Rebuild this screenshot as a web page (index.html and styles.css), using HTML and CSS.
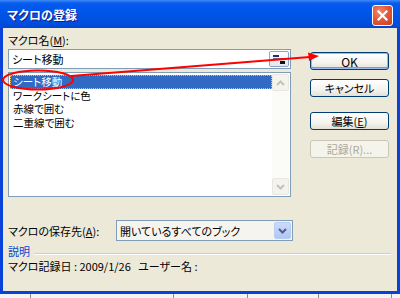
FILE: index.html
```html
<!DOCTYPE html>
<html lang="ja">
<head>
<meta charset="utf-8">
<link rel="stylesheet" href="styles.css">
</head>
<body>
<div class="window">
  <div class="titlebar">
    <span class="title">マクロの登録</span>
    <span class="close"><svg width="11" height="11" viewBox="0 0 11 11"><path d="M1.5 1.5 L9.5 9.5 M9.5 1.5 L1.5 9.5" stroke="#fff" stroke-width="2.2" stroke-linecap="square"/></svg></span>
  </div>
  <div class="body">
    <div class="top">
      <div class="left">
        <div class="label">マクロ名(<u>M</u>):</div>
        <div class="input">
          <span class="value">シート移動</span>
          <span class="collapse"><svg width="14" height="11" viewBox="0 0 14 11"><rect x="1" y="1" width="6" height="2" fill="#1A2A8C"/><rect x="1" y="4" width="12" height="1" fill="#6A7080"/><rect x="8" y="7" width="5" height="3" fill="#111"/></svg></span>
        </div>
        <div class="list">
          <div class="items">
            <div class="item sel">シート移動</div>
            <div class="item">ワークシートに色</div>
            <div class="item">赤線で囲む</div>
            <div class="item">二重線で囲む</div>
          </div>
          <div class="scroll">
            <span class="sbtn"><svg width="9" height="6" viewBox="0 0 9 6"><path d="M1 5 L4.5 1.5 L8 5" fill="none" stroke="#C5C3B8" stroke-width="2"/></svg></span>
            <span class="track"></span>
            <span class="sbtn"><svg width="9" height="6" viewBox="0 0 9 6"><path d="M1 1 L4.5 4.5 L8 1" fill="none" stroke="#C5C3B8" stroke-width="2"/></svg></span>
          </div>
        </div>
      </div>
      <div class="buttons">
        <div class="btn default">OK</div>
        <div class="btn b-cancel">キャンセル</div>
        <div class="btn b-edit">編集(<u>E</u>)</div>
        <div class="btn b-rec disabled">記録(R)...</div>
      </div>
    </div>
    <div class="store">
      <span class="store-label">マクロの保存先(<u>A</u>):</span>
      <div class="combo">
        <span class="value">開いているすべてのブック</span>
        <span class="drop"><svg width="9" height="6" viewBox="0 0 9 6"><path d="M1 1 L4.5 4.5 L8 1" fill="none" stroke="#4D6185" stroke-width="2"/></svg></span>
      </div>
    </div>
    <div class="desc"><span class="desc-title">説明</span><span class="rule"></span></div>
    <div class="info">マクロ記録日 : 2009/1/26&nbsp;&nbsp;&nbsp;ユーザー名 :</div>
  </div>
</div>
<div class="sheet"><span></span><span></span><span></span><span></span><span></span></div>
<svg class="annot" width="400" height="298" viewBox="0 0 400 298">
  <ellipse cx="38" cy="80" rx="35" ry="9.5" fill="none" stroke="#F00" stroke-width="2"/>
  <line x1="71" y1="76" x2="310" y2="57" stroke="#F00" stroke-width="2"/>
  <path d="M319 56 L308 52.5 L309 61 Z" fill="#F00"/>
</svg>
</body>
</html>
```
FILE: styles.css
```css
* { box-sizing: border-box; }
html, body { margin: 0; padding: 0; }
body {
  width: 400px; height: 298px; overflow: hidden; position: relative;
  background: #fff;
  font-family: "Noto Sans CJK JP", "Noto Sans", sans-serif;
  font-size: 11px;
  font-feature-settings: "palt";
  color: #000;
}
u { text-decoration: underline; text-underline-offset: 1px; }
.window {
  width: 400px; height: 294px;
  background: #0842D8;
  display: flex; flex-direction: column;
  padding: 0 3px 3px 3px;
}
.titlebar {
  height: 28px; margin: 0 -3px;
  background: linear-gradient(#3E8BFA 0, #0A5CEB 3px, #0058EE 7px, #0054E8 14px, #0050E0 22px, #0046D0 28px);
  display: flex; align-items: center; justify-content: space-between;
  padding: 0 7px 0 7px;
}
.title {
  color: #fff; font-weight: bold; font-size: 12px; line-height: 14px;
  text-shadow: 1px 1px 0 #0A1E8C;
  margin-top: 2px;
}
.close {
  width: 21px; height: 21px; border: 1px solid #fff; border-radius: 3px;
  background: radial-gradient(circle at 35% 30%, #F08A70 0, #E25A3A 45%, #C8401C 100%);
  display: flex; align-items: center; justify-content: center;
  margin-top: 2px; margin-right: 0;
}
.body {
  flex: 1; background: #ECE9D8;
  padding: 6px 8px 0 5px;
  display: flex; flex-direction: column;
}
.top { display: flex; gap: 19px; }
.left { width: 283px; display: flex; flex-direction: column; }
.label { height: 13px; line-height: 13px; }
.input {
  margin-top: 2px; height: 20px; background: #fff; border: 1px solid #7F9DB9;
  display: flex; align-items: center; justify-content: space-between;
  padding: 0 1px 0 3px;
}
.value { line-height: 14px; }
.collapse {
  width: 20px; height: 16px; border: 1px solid #8FA6C8; border-radius: 2px;
  background: linear-gradient(#FFFFFF, #E4E6EE);
  display: flex; align-items: center; justify-content: center;
}
.list {
  margin-top: 3px; height: 125px; background: #fff; border: 1px solid #7F9DB9;
  display: flex; padding: 1px;
}
.items { flex: 1; padding-top: 1px; }
.item { height: 13.5px; line-height: 13.5px; padding-left: 3px; font-size: 10.5px; }
.item.sel { background: #316AC5; color: #fff; outline: 1px dotted #E8C060; outline-offset: -1px; }
.scroll { width: 17px; display: flex; flex-direction: column; background: #FBFBF8; }
.sbtn {
  height: 17px; border: 1px solid #E8E7E0; border-radius: 2px; background: #F4F3EE;
  display: flex; align-items: center; justify-content: center;
}
.track { flex: 1; }
.buttons { width: 79px; display: flex; flex-direction: column; padding-top: 18px; }
.btn {
  height: 18px; border: 1px solid #003C74; border-radius: 3px;
  background: linear-gradient(#FFFFFF 0, #F4F3EE 60%, #E3E1D6 100%);
  display: flex; align-items: center; justify-content: center;
  line-height: 13px;
}
.btn.default { box-shadow: inset 0 0 0 1px #9DB8EC, inset 0 -1px 0 1px #7D9CE0; font-size: 12px; }
.b-cancel { margin-top: 9px; }
.b-edit { margin-top: 15px; }
.b-rec { margin-top: 10px; }
.btn.disabled { border-color: #C9C7BA; color: #ACA899; background: #F5F4EA; }
.store { margin-top: 23px; display: flex; align-items: center; }
.store-label { width: 108px; }
.combo {
  width: 177px; height: 21px; background: #F5F4EE; border: 1px solid #7F9DB9;
  display: flex; align-items: center; justify-content: space-between;
  padding: 0 1px 0 3px;
}
.drop {
  width: 17px; height: 17px; border: 1px solid #B9CCF2; border-radius: 2px;
  background: linear-gradient(#CCDAFB, #B0C6F6);
  display: flex; align-items: center; justify-content: center;
}
.desc { margin-top: 4px; height: 13px; display: flex; align-items: center; gap: 4px; }
.desc-title { color: #0046D5; line-height: 13px; }
.rule { flex: 1; height: 2px; border-top: 1px solid #D0D0BF; border-bottom: 1px solid #fff; margin-top: 4px; margin-right: -2px; }
.info { margin-top: 2px; line-height: 13px; }
.sheet { height: 4px; position: relative; background: #F4F4F4; display: flex; }
.sheet span { width: 1px; height: 4px; background: #8A8A8A; }
.sheet span:nth-child(1) { margin-left: 30px; }
.sheet span:nth-child(2) { margin-left: 142px; }
.sheet span:nth-child(3) { margin-left: 73px; }
.sheet span:nth-child(4) { margin-left: 70px; }
.sheet span:nth-child(5) { margin-left: 72px; }
.annot { position: absolute; left: 0; top: 0; pointer-events: none; }
```
